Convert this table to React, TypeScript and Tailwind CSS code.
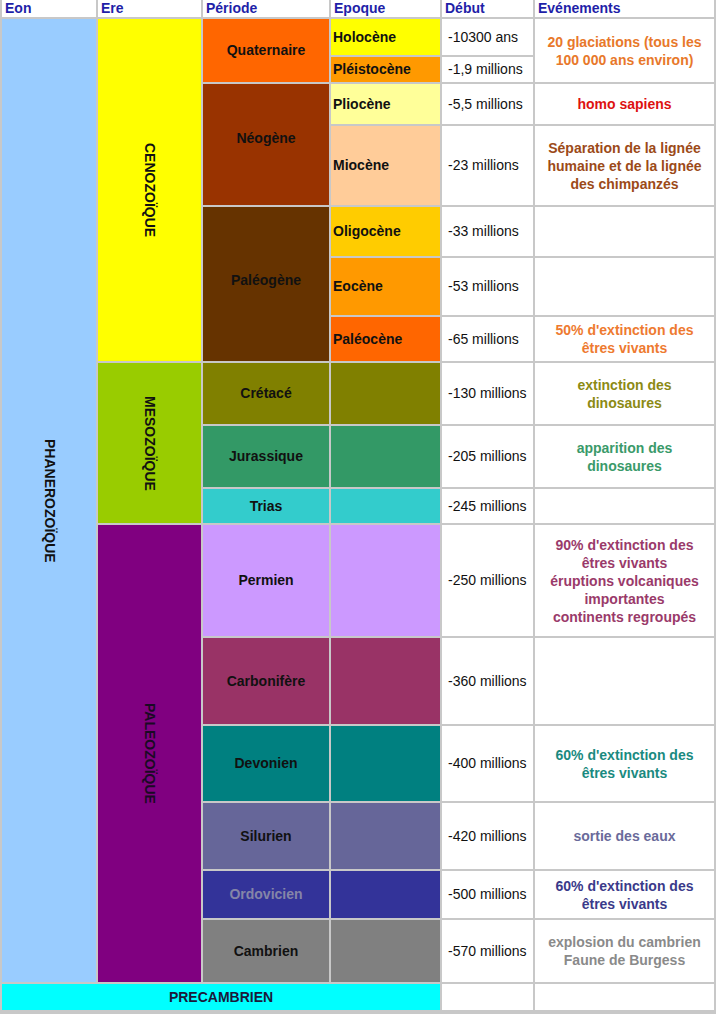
type Epoque = {
  pos: string;
  name: string;
  bg: string;
  debut: string;
};

type Periode = {
  pos: string;
  name: string;
  bg: string;
  text?: string;
};

type Event = {
  pos: string;
  color: string;
  lines: string[];
};

const periodes: Periode[] = [
  { pos: "row-start-2 row-span-2", name: "Quaternaire", bg: "bg-[#ff6600]" },
  { pos: "row-start-4 row-span-2 pb-[12px]", name: "Néogène", bg: "bg-[#993300]" },
  { pos: "row-start-6 row-span-3 pb-[8px]", name: "Paléogène", bg: "bg-[#663300]" },
  { pos: "row-start-9", name: "Crétacé", bg: "bg-[#808000]" },
  { pos: "row-start-10", name: "Jurassique", bg: "bg-[#339966]" },
  { pos: "row-start-11", name: "Trias", bg: "bg-[#33cccc]" },
  { pos: "row-start-12", name: "Permien", bg: "bg-[#cc99ff]" },
  { pos: "row-start-13", name: "Carbonifère", bg: "bg-[#993366]" },
  { pos: "row-start-14", name: "Devonien", bg: "bg-[#008080]" },
  { pos: "row-start-15", name: "Silurien", bg: "bg-[#666699]" },
  { pos: "row-start-16", name: "Ordovicien", bg: "bg-[#333399]", text: "text-[#8585a8]" },
  { pos: "row-start-17", name: "Cambrien", bg: "bg-[#808080]" },
];

const epoques: Epoque[] = [
  { pos: "row-start-2", name: "Holocène", bg: "bg-[#ffff00]", debut: "-10300 ans" },
  { pos: "row-start-3", name: "Pléistocène", bg: "bg-[#ff9900]", debut: "-1,9 millions" },
  { pos: "row-start-4", name: "Pliocène", bg: "bg-[#ffff99]", debut: "-5,5 millions" },
  { pos: "row-start-5", name: "Miocène", bg: "bg-[#ffcc99]", debut: "-23 millions" },
  { pos: "row-start-6", name: "Oligocène", bg: "bg-[#ffcc00]", debut: "-33 millions" },
  { pos: "row-start-7", name: "Eocène", bg: "bg-[#ff9900]", debut: "-53 millions" },
  { pos: "row-start-8", name: "Paléocène", bg: "bg-[#ff6600]", debut: "-65 millions" },
  { pos: "row-start-9", name: "", bg: "bg-[#808000]", debut: "-130 millions" },
  { pos: "row-start-10", name: "", bg: "bg-[#339966]", debut: "-205 millions" },
  { pos: "row-start-11", name: "", bg: "bg-[#33cccc]", debut: "-245 millions" },
  { pos: "row-start-12", name: "", bg: "bg-[#cc99ff]", debut: "-250 millions" },
  { pos: "row-start-13", name: "", bg: "bg-[#993366]", debut: "-360 millions" },
  { pos: "row-start-14", name: "", bg: "bg-[#008080]", debut: "-400 millions" },
  { pos: "row-start-15", name: "", bg: "bg-[#666699]", debut: "-420 millions" },
  { pos: "row-start-16", name: "", bg: "bg-[#333399]", debut: "-500 millions" },
  { pos: "row-start-17", name: "", bg: "bg-[#808080]", debut: "-570 millions" },
];

const events: Event[] = [
  {
    pos: "row-start-2 row-span-2",
    color: "text-[#e8782a]",
    lines: ["20 glaciations (tous les", "100 000 ans environ)"],
  },
  { pos: "row-start-4", color: "text-[#dd1111]", lines: ["homo sapiens"] },
  {
    pos: "row-start-5",
    color: "text-[#9c4a18]",
    lines: ["Séparation de la lignée", "humaine et de la lignée", "des chimpanzés"],
  },
  { pos: "row-start-6", color: "", lines: [] },
  { pos: "row-start-7", color: "", lines: [] },
  {
    pos: "row-start-8",
    color: "text-[#ee7a30]",
    lines: ["50% d'extinction des", "êtres vivants"],
  },
  {
    pos: "row-start-9",
    color: "text-[#8c8a14]",
    lines: ["extinction des", "dinosaures"],
  },
  {
    pos: "row-start-10",
    color: "text-[#3a9a6a]",
    lines: ["apparition des", "dinosaures"],
  },
  { pos: "row-start-11", color: "", lines: [] },
  {
    pos: "row-start-12",
    color: "text-[#9a3a6a]",
    lines: [
      "90% d'extinction des",
      "êtres vivants",
      "éruptions volcaniques",
      "importantes",
      "continents regroupés",
    ],
  },
  { pos: "row-start-13", color: "", lines: [] },
  {
    pos: "row-start-14",
    color: "text-[#1a8a80]",
    lines: ["60% d'extinction des", "êtres vivants"],
  },
  { pos: "row-start-15", color: "text-[#6a6a9a]", lines: ["sortie des eaux"] },
  {
    pos: "row-start-16",
    color: "text-[#3a3a8a]",
    lines: ["60% d'extinction des", "êtres vivants"],
  },
  {
    pos: "row-start-17",
    color: "text-[#8a8a8a]",
    lines: ["explosion du cambrien", "Faune de Burgess"],
  },
  { pos: "row-start-18", color: "", lines: [] },
];

const headers = ["Eon", "Ere", "Période", "Epoque", "Début", "Evénements"];

const App = () => {
  return (
    <div className="w-[716px] h-[1014px] bg-[#c8c8c8] pl-[2px] pb-[4px] font-['Liberation_Sans',Arial,sans-serif] text-[14px]">
      <div className="grid gap-[2px] grid-cols-[94px_103px_126px_109px_91px_179px] grid-rows-[17px_36px_25px_40px_79px_49px_57px_44px_61px_61px_34px_111px_86px_75px_66px_47px_62px_26px]">
        {headers.map((h) => (
          <div
            key={h}
            className="row-start-1 bg-white pl-[3px] leading-[17px] font-bold text-[#1f1fa8]"
          >
            {h}
          </div>
        ))}

        {/* eon */}
        <div className="col-start-1 row-start-2 row-span-16 bg-[#99ccff] flex items-center justify-center">
          <span className="[writing-mode:vertical-rl] font-bold text-[#111]">
            PHANEROZOÏQUE
          </span>
        </div>

        {/* eres */}
        <div className="col-start-2 row-start-2 row-span-7 bg-[#ffff00] flex items-center justify-center">
          <span className="[writing-mode:vertical-rl] font-bold text-[#111]">
            CENOZOÏQUE
          </span>
        </div>
        <div className="col-start-2 row-start-9 row-span-3 bg-[#99cc00] flex items-center justify-center">
          <span className="[writing-mode:vertical-rl] font-bold text-[#111]">
            MESOZOÏQUE
          </span>
        </div>
        <div className="col-start-2 row-start-12 row-span-6 bg-[#800080] flex items-center justify-center">
          <span className="[writing-mode:vertical-rl] font-bold text-[#1a0a24]">
            PALEOZOÏQUE
          </span>
        </div>

        {periodes.map((p) => (
          <div
            key={p.name}
            className={`col-start-3 ${p.pos} ${p.bg} ${p.text ?? "text-[#111]"} flex items-center justify-center font-bold`}
          >
            {p.name}
          </div>
        ))}

        {epoques.map((e) => (
          <div
            key={e.debut}
            className={`col-start-4 ${e.pos} ${e.bg} flex items-center pl-[2px] font-bold text-[#111]`}
          >
            {e.name}
          </div>
        ))}

        {epoques.map((e) => (
          <div
            key={"d" + e.debut}
            className={`col-start-5 ${e.pos} bg-white flex items-center pl-[6px] text-[#111]`}
          >
            {e.debut}
          </div>
        ))}

        {events.map((ev) => (
          <div
            key={ev.pos}
            className={`col-start-6 ${ev.pos} ${ev.color} bg-white flex flex-col items-center justify-center text-center font-bold leading-[18px]`}
          >
            {ev.lines.map((l) => (
              <span key={l}>{l}</span>
            ))}
          </div>
        ))}

        {/* precambrien */}
        <div className="col-start-1 col-span-4 row-start-18 bg-[#00ffff] flex items-center justify-center font-bold text-[#1a1a3a]">
          PRECAMBRIEN
        </div>
        <div className="col-start-5 row-start-18 bg-white" />
      </div>
    </div>
  );
};

export default App;
